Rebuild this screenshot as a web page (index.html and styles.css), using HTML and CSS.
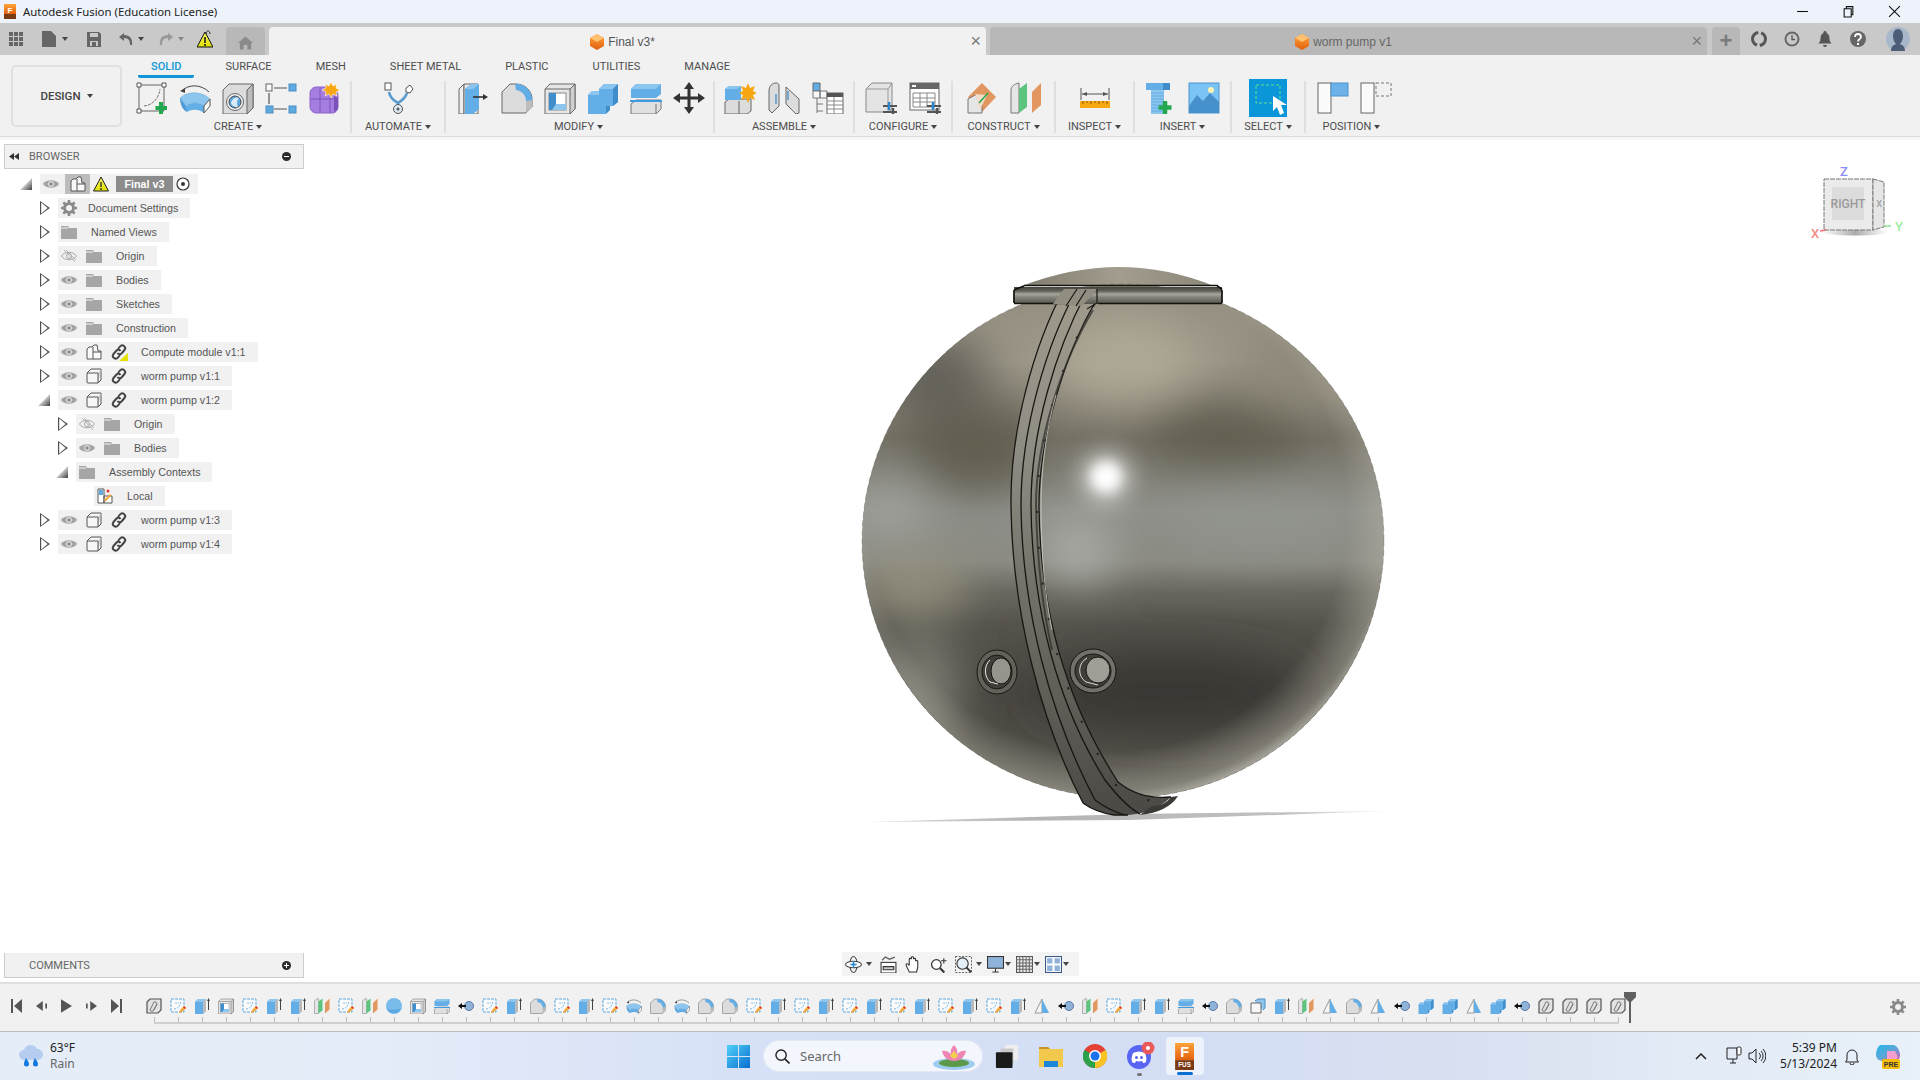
FILE: index.html
```html
<!DOCTYPE html>
<html lang="en">
<head>
    <meta charset="UTF-8">
    <title>Autodesk Fusion (Education License)</title>
    <link rel="stylesheet" href="styles.css">
</head>
<body>
    <svg class="sprites" xmlns="http://www.w3.org/2000/svg">
        <defs>
            <linearGradient id="g-warn" x1="0" y1="0" x2="0" y2="1"><stop offset="0" stop-color="#f6f36a"/><stop offset="1" stop-color="#dfe000"/></linearGradient>
            <linearGradient id="g-orange" x1="0" y1="0" x2="0" y2="1"><stop offset="0" stop-color="#ffa33a"/><stop offset="1" stop-color="#e2600f"/></linearGradient>
            <linearGradient id="g-win" x1="0" y1="0" x2="1" y2="1"><stop offset="0" stop-color="#4fd0f7"/><stop offset="1" stop-color="#0a6fd0"/></linearGradient>
            <linearGradient id="g-copilot" x1="0" y1="0" x2="1" y2="1"><stop offset="0" stop-color="#27b5e8"/><stop offset=".5" stop-color="#5aa7d8"/><stop offset="1" stop-color="#d452b0"/></linearGradient>
        </defs>

        <!-- ribbon -->
        <symbol id="i-sketch-new" viewBox="0 0 32 32">
            <path d="M3 3h25v26H3z" fill="none" stroke="#666"/>
            <path d="M8 24C17 23 23 16 24 7" fill="none" stroke="#777" stroke-dasharray="3 1"/>
            <path d="M1 1h4v4H1zM26 1h4v4h-4zM1 27h4v4H1z" fill="#fff" stroke="#555"/>
            <path d="M25 20v12M19.500 26h11.500" stroke="#23a850" stroke-width="4"/>
        </symbol>
        <symbol id="i-revolve" viewBox="0 0 32 32">
            <path d="M3 9C9 2 22 2 30 10" fill="none" stroke="#444"/>
            <path d="M1 9l5-3 0 5z" fill="#444"/>
            <path d="M1 16c7-7 22-7 30 1l-6 7c-5-4-13-4-18 0z" fill="#8cc5ee" stroke="#6aa8d8" stroke-width=".5"/>
            <path d="M1 16l6 8c1 1 1 4 1 6-4-2-7-7-7-14z" fill="#4f9bd8"/>
            <path d="M7 24c5-4 13-4 18 0v7c-5-4-12-4-17-1z" fill="#63aee6"/>
            <path d="M25 24l6-7v7l-6 7z" fill="#fff" stroke="#555"/>
        </symbol>
        <symbol id="i-hole" viewBox="0 0 32 32">
            <path d="M1 8l6-6h24v24l-6 6H1z" fill="#dcdcdc" stroke="#666"/>
            <path d="M25 32V8l6-6v24z" fill="#bdbdbd" stroke="#666"/>
            <circle cx="13" cy="20" r="8.500" fill="#f2f2f2" stroke="#666"/>
            <circle cx="13" cy="20" r="6" fill="#5da9e0" stroke="#444"/>
            <path d="M9 21a6 6 0 0 1 8-5a8 8 0 0 0-1 9a6 6 0 0 1-7-4z" fill="#dcebf7"/>
        </symbol>
        <symbol id="i-pattern" viewBox="0 0 32 32">
            <path d="M9 6h13M9 27h13M4 11v11" stroke="#555" stroke-width="1.200"/>
            <rect x="1" y="2" width="6" height="7" fill="#f8f8f8" stroke="#666"/>
            <rect x="24" y="2" width="7" height="7" fill="#5da9e0" stroke="#4a90c4"/>
            <rect x="1" y="24" width="7" height="7" fill="#5da9e0" stroke="#4a90c4"/>
            <rect x="24" y="24" width="7" height="7" fill="#5da9e0" stroke="#4a90c4"/>
        </symbol>
        <symbol id="i-form" viewBox="0 0 32 32">
            <path d="M2 12c0-5 3-7 7-7h12c5 0 9 4 9 9v10c0 4-2 7-6 7H9c-4 0-7-2-7-7z" fill="#a67de0" stroke="#8a63c8"/>
            <path d="M3 17h24M12 6v25M22 8v23" stroke="#7d58bd"/>
            <path d="M26 14l4 2v10l-4 5z" fill="#7b52b8"/>
            <path d="M23 0l2 4 4-2-1 4 4 2-4 2 1 4-4-2-2 4-2-4-4 2 1-4-4-2 4-2-1-4 4 2z" fill="#f7a711" stroke="#fff" stroke-width=".6"/>
        </symbol>
        <symbol id="i-auto" viewBox="0 0 32 32">
            <path d="M7 10c1 7 6 9 9 11 3-2 7-4 9-10M16 21v4" fill="none" stroke="#5a9ccf" stroke-width="2.600"/>
            <rect x="3" y="1" width="6" height="7" fill="#fff" stroke="#555"/>
            <path d="M24 6l4-3 3 4-3 4-4-1z" fill="#fff" stroke="#555"/>
            <circle cx="16" cy="27" r="4.500" fill="#dbe8f2" stroke="#555"/>
            <circle cx="16" cy="27" r="1.500" fill="#555"/>
        </symbol>
        <symbol id="i-press" viewBox="0 0 32 32">
            <path d="M1 7l5-5v30H1z" fill="#eee" stroke="#666"/>
            <path d="M6 2h14v30H6z" fill="#e8e8e8" stroke="#666"/>
            <path d="M7 7l6-5h8v25l-6 5H7z" fill="#63aee6"/>
            <path d="M7 7l6-5h8l-6 5z" fill="#8cc5ee"/>
            <path d="M15 15h13" stroke="#333" stroke-width="1.600"/>
            <path d="M25 12l5 3-5 3z" fill="#333"/>
        </symbol>
        <symbol id="i-fillet" viewBox="0 0 32 32">
            <path d="M1 10L9 2h6c9 0 16 7 16 15v8l-6 6H1z" fill="#dcdcdc" stroke="#666"/>
            <path d="M14 2h2c8 0 15 7 15 15v2h-6c0-6-4-10-10-11z" fill="#63aee6"/>
            <path d="M25 31v-12l6-1v8z" fill="#bdbdbd"/>
        </symbol>
        <symbol id="i-shell" viewBox="0 0 32 32">
            <path d="M1 7l5-5h25v25l-5 5H1z" fill="#e6e6e6" stroke="#666"/>
            <path d="M26 32V7l5-5v25z" fill="#cfcfcf" stroke="#666"/>
            <path d="M1 7h25" stroke="#666"/>
            <rect x="5" y="11" width="17" height="17" fill="#fff" stroke="#888"/>
            <path d="M5 11h7v11h10v6H5z" fill="#3f8dcb"/>
            <path d="M12 22h10v6H8z" fill="#8cc5ee"/>
        </symbol>
        <symbol id="i-union" viewBox="0 0 32 32">
            <path d="M12 7l5-5h14v18l-5 4h-7v8H1V13l4-4h7z" fill="#63aee6"/>
            <path d="M12 7l5-5h14l-5 5zM1 13l4-4h7v4z" fill="#8cc5ee"/>
            <path d="M26 7v17l5-4V2zM19 24v8l4-4v-4z" fill="#3f8dcb"/>
        </symbol>
        <symbol id="i-split" viewBox="0 0 32 32">
            <path d="M1 22l5-4h25v9l-5 5H1z" fill="#e0e0e0" stroke="#777"/>
            <path d="M26 32v-10" stroke="#777"/>
            <path d="M1 7l5-5h25v10l-5 4H1z" fill="#63aee6"/>
            <path d="M1 7l5-5h25l-5 5z" fill="#8cc5ee"/>
            <path d="M0 19h32" stroke="#3f9be0" stroke-width="2"/>
        </symbol>
        <symbol id="i-move" viewBox="0 0 32 32">
            <path d="M16 3v26M3 16h26" stroke="#333" stroke-width="3"/>
            <path d="M16 0l5 7H11zM16 32l5-7H11zM0 16l7-5v10zM32 16l-7-5v10z" fill="#333"/>
        </symbol>
        <symbol id="i-newcomp" viewBox="0 0 32 32">
            <path d="M1 20l4-3h22v12l-4 3H1z" fill="#dcdcdc" stroke="#666"/>
            <path d="M15 19v13" stroke="#666"/>
            <path d="M1 7l4-3h12v14H1z" fill="#63aee6"/>
            <path d="M1 7l4-3h12l-4 3z" fill="#8cc5ee"/>
            <path d="M24 1l2 5 5-2-2 5 4 2-4 2 2 5-5-2-2 5-2-5-5 2 2-5-4-2 4-2-2-5 5 2z" fill="#f7a711"/>
        </symbol>
        <symbol id="i-joint-panels" viewBox="0 0 32 32">
            <path d="M1 9c0-6 4-8 7-8 2 0 3 1 3 3v20l-7 7-3-3z" fill="#dcdcdc" stroke="#666"/>
            <path d="M18 5l13 12v14l-3 1-10-10z" fill="#dcdcdc" stroke="#666"/>
            <path d="M8 12v10M20 9v9" stroke="#3f8dcb" stroke-width="1.300"/>
        </symbol>
        <symbol id="i-table" viewBox="0 0 32 32">
            <path d="M1 1h7v8H1z" fill="#63aee6" stroke="#666"/>
            <path d="M1 9h7v7H1zM8 9h7v7H8zM5 16v15M5 22h6M5 29h6" fill="#f8f8f8" stroke="#777"/>
            <rect x="15" y="11" width="16" height="21" fill="#fff" stroke="#666"/>
            <path d="M15 11h16v4H15z" fill="#555"/>
            <path d="M15 19h16M15 23h16M15 27h16M22 15v17" stroke="#888"/>
        </symbol>
        <symbol id="i-conf-box" viewBox="0 0 32 32">
            <path d="M1 7l6-6h20v26l-4 3H1z" fill="#e4e4e4" stroke="#888"/>
            <path d="M1 7h22l4-6" fill="none" stroke="#999"/>
            <path d="M23 7v23" stroke="#999"/>
            <path d="M18 24h14M18 30h14" stroke="#555" stroke-width="2"/>
            <path d="M24 20v8" stroke="#2a85cc" stroke-width="2.500"/>
            <path d="M28 26v6" stroke="#555" stroke-width="2.500"/>
        </symbol>
        <symbol id="i-conf-table" viewBox="0 0 32 32">
            <rect x="1" y="1" width="29" height="27" fill="#fff" stroke="#666"/>
            <path d="M1 1h29v6H1z" fill="#666"/>
            <path d="M3 3h4v2H3z" fill="#fff"/>
            <path d="M4 11h22v14H4zM4 16h22M4 20h22M11 11v14M18 11v14" fill="none" stroke="#888"/>
            <path d="M18 24h14M18 30h14" stroke="#555" stroke-width="2"/>
            <path d="M24 20v8" stroke="#2a85cc" stroke-width="2.500"/>
            <path d="M28 26v6" stroke="#555" stroke-width="2.500"/>
        </symbol>
        <symbol id="i-plane-angle" viewBox="0 0 32 32">
            <path d="M16 1l14 14-14 15-14-15z" fill="#e1975f"/>
            <path d="M2 17l7-4 7 6v12H2z" fill="#e6e6e6" stroke="#777"/>
            <path d="M9 12l12 1-7 15z" fill="#f3dcc8"/>
            <path d="M13 21L22 11" stroke="#23a850" stroke-width="1.500"/>
        </symbol>
        <symbol id="i-plane" viewBox="0 0 32 32">
            <path d="M1 8c0-3 3-6 8-7v30H1z" fill="#e6e6e6" stroke="#777"/>
            <path d="M9 7l8-6v24l-8 6z" fill="#5cc47f"/>
            <path d="M22 10l9-9v22l-9 8z" fill="#e1975f"/>
        </symbol>
        <symbol id="i-measure" viewBox="0 0 32 32">
            <path d="M2 6v12M30 6v12" stroke="#555"/>
            <path d="M3 12h26" stroke="#555"/>
            <path d="M3 12l5-2v4zM29 12l-5-2v4z" fill="#555"/>
            <rect x="1" y="19" width="30" height="7" fill="#f7a711"/>
            <path d="M4 19v3M8 19v2M12 19v3M16 19v2M20 19v3M24 19v2M28 19v3" stroke="#8a5a00"/>
        </symbol>
        <symbol id="i-bolt" viewBox="0 0 32 32">
            <path d="M1 1h24v7H1z" fill="#63aee6"/>
            <path d="M18 1h7v7h-7z" fill="#3f8dcb"/>
            <path d="M6 8h13v24H6z" fill="#8cc5ee"/>
            <path d="M6 11h13M6 14h13M6 17h13M6 20h13M6 23h13M6 26h13M6 29h13" stroke="#63aee6"/>
            <path d="M20 19v13M13.500 25.500h13" stroke="#23a850" stroke-width="4.500"/>
        </symbol>
        <symbol id="i-image" viewBox="0 0 32 32">
            <rect x="1" y="1" width="30" height="30" fill="#7cc3f5" stroke="#4f94cc"/>
            <path d="M1 24l8-11 6 6 7-8 9 9v11H1z" fill="#4690cb"/>
            <circle cx="23" cy="8" r="3" fill="#f8f2b4"/>
        </symbol>
        <symbol id="i-select" viewBox="0 0 38 38">
            <rect width="38" height="38" fill="#0a96d8"/>
            <rect x="7" y="6" width="24" height="18" fill="none" stroke="#5fe08c" stroke-dasharray="3 2"/>
            <path d="M24 17v15l4-4 3 8 4-2-3-8h6z" fill="#fff"/>
        </symbol>
        <symbol id="i-pos-on" viewBox="0 0 32 32">
            <rect x="1" y="1" width="13" height="30" fill="#fbfbfb" stroke="#666"/>
            <rect x="14" y="1" width="17" height="13" fill="#6cb2e8" stroke="#4f94cc"/>
        </symbol>
        <symbol id="i-pos-off" viewBox="0 0 32 32">
            <rect x="1" y="1" width="13" height="30" fill="#fbfbfb" stroke="#666"/>
            <rect x="16" y="1" width="15" height="13" fill="none" stroke="#777" stroke-dasharray="3 2"/>
        </symbol>

        <!-- timeline -->
        <symbol id="t-sketch" viewBox="0 0 16 16">
            <rect x="1" y="1" width="13" height="13" fill="#fafafa" stroke="#5aa7e0" stroke-dasharray="3 1"/>
            <path d="M4 11c4 0 6-3 7-7M5 5h4" fill="none" stroke="#5aa7e0" stroke-width=".8" stroke-dasharray="2 1"/>
            <path d="M9 15l1-3 4-4 2 2-4 4z" fill="#f2a93b"/>
            <path d="M14 8l2 2 -1 1-2-2z" fill="#e3342f"/>
        </symbol>
        <symbol id="t-extrude" viewBox="0 0 16 16">
            <path d="M1 4l3-3h8v12l-3 3H1z" fill="#63aee6"/>
            <path d="M1 4l3-3h8l-3 3z" fill="#8cc5ee"/>
            <path d="M9 4l3-3v12l-3 3z" fill="#bbb"/>
            <path d="M14.500 1v11" stroke="#444"/>
            <path d="M13 3l1.500-3L16 3z" fill="#444"/>
        </symbol>
        <symbol id="t-link" viewBox="0 0 16 16">
            <path d="M1 4l3-3h11v11l-3 3H1z" fill="#e2e2e2" stroke="#555" stroke-width="1.200"/>
            <path d="M4 12l4-8a2.200 2.200 0 0 1 3 2l-4 7a2.200 2.200 0 0 1-3-1zM8 12l3-6" fill="none" stroke="#777"/>
        </symbol>
        <symbol id="t-sphere" viewBox="0 0 16 16">
            <circle cx="8" cy="8" r="8" fill="#79bcec"/>
            <path d="M.5 10a8 8 0 0 0 15 0c-3 2-12 2-15 0z" fill="#5da9e0"/>
        </symbol>
        <symbol id="t-joint" viewBox="0 0 16 16">
            <circle cx="11" cy="8" r="4.500" fill="#8fb2d9" stroke="#5a7da6"/>
            <path d="M0 8l4-3v2h4v2H4v2z" fill="#111"/>
        </symbol>
        <symbol id="t-draft" viewBox="0 0 16 16">
            <path d="M8 1L1 15h7z" fill="#f6f6f6" stroke="#999"/>
            <path d="M8 1l7 14H8z" fill="#63aee6"/>
        </symbol>
        <symbol id="t-copy" viewBox="0 0 16 16">
            <path d="M5 3l3-2h7v9l-2 2" fill="#8cc5ee" stroke="#4a90c4"/>
            <path d="M1 5h10v10H1z" fill="#f6f6f6" stroke="#666"/>
        </symbol>

        <!-- browser tree -->
        <symbol id="b-eye" viewBox="0 0 16 16">
            <path d="M0 8c3-5 13-5 16 0-3 5-13 5-16 0z" fill="#a3a3a3"/>
            <circle cx="8" cy="8" r="3" fill="#dcdcdc"/>
            <circle cx="8" cy="8" r="1.800" fill="#8f8f8f"/>
        </symbol>
        <symbol id="b-eye-off" viewBox="0 0 16 16">
            <path d="M.5 8c3-5 12-5 15 0-3 5-12 5-15 0z" fill="none" stroke="#aaa"/>
            <circle cx="8" cy="8" r="2.500" fill="none" stroke="#aaa"/>
            <path d="M3 2l11 12M5 2l10 10" stroke="#aaa" stroke-width=".8"/>
        </symbol>
        <symbol id="b-folder" viewBox="0 0 16 16">
            <path d="M0 2h7l1 2h8v11H0z" fill="#a6a6a6"/>
            <path d="M0 4h7" stroke="#f2f2f2"/>
        </symbol>
        <symbol id="b-comp" viewBox="0 0 16 16">
            <path d="M1 5l2-2h3l2-2h3l1 6h3v8H1z" fill="#fafafa" stroke="#555" stroke-linejoin="round"/>
            <path d="M7 8h8M7 8v7M7 8V3" stroke="#555" fill="none"/>
        </symbol>
        <symbol id="b-box" viewBox="0 0 16 16">
            <path d="M1 5l4-4h10v11l-3 3H2a1 1 0 0 1-1-1z" fill="#f6f6f6" stroke="#555" stroke-linejoin="round"/>
            <path d="M12 15V5l3-4z" fill="#cfcfcf"/>
            <path d="M1 5h11v10" fill="none" stroke="#555"/>
        </symbol>
        <symbol id="b-link" viewBox="0 0 16 16">
            <path d="M7 5l2-2.500a2.700 2.700 0 0 1 4.500 3.500l-3 3.500a2.700 2.700 0 0 1-4-.5" fill="none" stroke="#444" stroke-width="2"/>
            <path d="M9 11l-2 2.500A2.700 2.700 0 0 1 2.500 10l3-3.500a2.700 2.700 0 0 1 4 .5" fill="none" stroke="#444" stroke-width="2"/>
        </symbol>
        <symbol id="b-gear" viewBox="0 0 16 16">
            <circle cx="8" cy="8" r="4.500" fill="none" stroke="#8a8a8a" stroke-width="3"/>
            <path d="M8 0v3M8 13v3M0 8h3M13 8h3M2.300 2.300l2.200 2.200M11.500 11.500l2.200 2.200M13.700 2.300l-2.200 2.200M4.500 11.500l-2.200 2.200" stroke="#8a8a8a" stroke-width="2.600"/>
        </symbol>
    </svg>

    <header class="titlebar">
        <div class="app-title">
            <svg class="app-logo" viewBox="0 0 14 15">
                <path d="M1 0h12v10H1z" fill="url(#g-orange)"/>
                <path d="M1 10h12v5H1z" fill="#7a3b14"/>
                <text x="7" y="8.500" class="logo-f">F</text>
            </svg>
            <span>Autodesk Fusion (Education License)</span>
        </div>
        <div class="window-btns">
            <svg viewBox="0 0 12 12"><path d="M1 6h10" stroke="#111"/></svg>
            <svg viewBox="0 0 12 12"><path d="M2 3.500h6.500V11H2zM4 3.500V1.500h6V9H8.500" fill="none" stroke="#111"/></svg>
            <svg viewBox="0 0 12 12"><path d="M1 1l10 10M11 1L1 11" stroke="#111"/></svg>
        </div>
    </header>

    <div class="tabstrip">
        <div class="quick">
            <svg class="q-grid" viewBox="0 0 14 14"><path d="M0 0h4v4H0zM5 0h4v4H5zM10 0h4v4h-4zM0 5h4v4H0zM5 5h4v4H5zM10 5h4v4h-4zM0 10h4v4H0zM5 10h4v4H5zM10 10h4v4h-4z" fill="#666"/></svg>
            <svg class="q-doc" viewBox="0 0 14 16"><path d="M0 0h9l5 5v11H0z" fill="#666"/></svg>
            <span class="caret"></span>
            <svg class="q-save" viewBox="0 0 14 15"><path d="M0 0h12l2 2v13H0z" fill="#666"/><path d="M3 1h8v4H3zM3 9h8v5H3z" fill="#c9c9c9"/><path d="M5 10h4v4H5z" fill="#666"/></svg>
            <svg class="q-undo" viewBox="0 0 14 14"><path d="M5 1L0 5l5 4V6c5 0 6 3 6 7h2c1-6-2-10-8-10z" fill="#666"/></svg>
            <span class="caret"></span>
            <svg class="q-redo" viewBox="0 0 14 14"><path d="M9 1l5 4-5 4V6C4 6 3 9 3 13H1C0 7 3 3 9 3z" fill="#999"/></svg>
            <span class="caret caret-dim"></span>
            <svg class="q-warn" viewBox="0 0 16 18"><path d="M9 4c0-4 4-4 4 0" fill="none" stroke="#222"/><path d="M8 2L0 17h16z" fill="url(#g-warn)" stroke="#111"/><path d="M8 7v6M8 14v2" stroke="#111" stroke-width="1.500"/></svg>
        </div>
        <div class="tab home-tab">
            <svg viewBox="0 0 16 14"><path d="M8 0l8 7h-2v7h-4V9H6v5H2V7H0z" fill="#8a8a8a"/></svg>
        </div>
        <div class="tab doc-tab active">
            <span></span>
            <span class="tab-name">
                <svg class="cube" viewBox="0 0 14 16"><path d="M7 0l7 4v8l-7 4-7-4V4z" fill="url(#g-orange)"/><path d="M7 0l7 4-7 4-7-4z" fill="#ffc070"/></svg>
                Final v3*
            </span>
            <span class="tab-close">×</span>
        </div>
        <div class="tab doc-tab">
            <span></span>
            <span class="tab-name">
                <svg class="cube" viewBox="0 0 14 16"><path d="M7 0l7 4v8l-7 4-7-4V4z" fill="url(#g-orange)"/><path d="M7 0l7 4-7 4-7-4z" fill="#ffc070"/></svg>
                worm pump v1
            </span>
            <span class="tab-close">×</span>
        </div>
        <div class="tab plus-tab">+</div>
        <div class="status-icons">
            <svg viewBox="0 0 16 16"><circle cx="8" cy="8" r="6.500" fill="none" stroke="#555" stroke-width="3"/><path d="M7 0h4l-3 6zM9 16H5l3-6z" fill="#c9c9c9"/></svg>
            <svg viewBox="0 0 16 16"><circle cx="8" cy="8" r="7.500" fill="#666"/><circle cx="8" cy="8" r="5.500" fill="#c9c9c9"/><path d="M8 4v4.500h3" fill="none" stroke="#555" stroke-width="1.300"/></svg>
            <svg viewBox="0 0 16 16"><path d="M8 0a1.500 1.500 0 0 1 1.500 2C12 3 12.500 5 12.500 8c0 2 1 3 2 4.500h-13c1-1.500 2-2.500 2-4.500 0-3 .5-5 3-6A1.500 1.500 0 0 1 8 0zM6 14h4a2 2 0 0 1-4 0z" fill="#555"/></svg>
            <svg viewBox="0 0 16 16"><circle cx="8" cy="8" r="8" fill="#666"/><path d="M5 6c0-4 6-4 6 0 0 2-3 2-3 4.500" fill="none" stroke="#fff" stroke-width="1.800"/><path d="M7 12h2v2H7z" fill="#fff"/></svg>
            <svg class="avatar" viewBox="0 0 24 24"><circle cx="12" cy="12" r="12" fill="#a9b7cb"/><path d="M5 24c0-5 3-6 5-7-2-2-3-5-3-8 0-4 2-7 5-7s5 3 5 7c0 3-1 6-3 8 2 1 5 2 5 7z" fill="#4d5d78"/></svg>
        </div>
    </div>

    <section class="ribbon">
        <div class="design-btn">DESIGN<span class="caret"></span></div>
        <div class="ribbon-main">
            <nav class="ribbon-tabs">
                <span class="rtab on">SOLID</span>
                <span class="rtab">SURFACE</span>
                <span class="rtab">MESH</span>
                <span class="rtab">SHEET METAL</span>
                <span class="rtab">PLASTIC</span>
                <span class="rtab">UTILITIES</span>
                <span class="rtab">MANAGE</span>
            </nav>
            <div class="tools">
                <div class="tool-group g-create">
                    <div class="icons">
                        <svg><use href="#i-sketch-new"/></svg>
                        <svg><use href="#i-revolve"/></svg>
                        <svg><use href="#i-hole"/></svg>
                        <svg><use href="#i-pattern"/></svg>
                        <svg><use href="#i-form"/></svg>
                    </div>
                    <div class="group-label">CREATE<span class="caret"></span></div>
                </div>
                <div class="tool-group g-automate">
                    <div class="icons"><svg><use href="#i-auto"/></svg></div>
                    <div class="group-label">AUTOMATE<span class="caret"></span></div>
                </div>
                <div class="tool-group g-modify">
                    <div class="icons">
                        <svg><use href="#i-press"/></svg>
                        <svg><use href="#i-fillet"/></svg>
                        <svg><use href="#i-shell"/></svg>
                        <svg><use href="#i-union"/></svg>
                        <svg><use href="#i-split"/></svg>
                        <svg><use href="#i-move"/></svg>
                    </div>
                    <div class="group-label">MODIFY<span class="caret"></span></div>
                </div>
                <div class="tool-group g-assemble">
                    <div class="icons">
                        <svg><use href="#i-newcomp"/></svg>
                        <svg><use href="#i-joint-panels"/></svg>
                        <svg><use href="#i-table"/></svg>
                    </div>
                    <div class="group-label">ASSEMBLE<span class="caret"></span></div>
                </div>
                <div class="tool-group g-configure">
                    <div class="icons">
                        <svg><use href="#i-conf-box"/></svg>
                        <svg><use href="#i-conf-table"/></svg>
                    </div>
                    <div class="group-label">CONFIGURE<span class="caret"></span></div>
                </div>
                <div class="tool-group g-construct">
                    <div class="icons">
                        <svg><use href="#i-plane-angle"/></svg>
                        <svg><use href="#i-plane"/></svg>
                    </div>
                    <div class="group-label">CONSTRUCT<span class="caret"></span></div>
                </div>
                <div class="tool-group g-inspect">
                    <div class="icons"><svg><use href="#i-measure"/></svg></div>
                    <div class="group-label">INSPECT<span class="caret"></span></div>
                </div>
                <div class="tool-group g-insert">
                    <div class="icons">
                        <svg><use href="#i-bolt"/></svg>
                        <svg><use href="#i-image"/></svg>
                    </div>
                    <div class="group-label">INSERT<span class="caret"></span></div>
                </div>
                <div class="tool-group g-select">
                    <div class="icons"><svg class="select-icon"><use href="#i-select"/></svg></div>
                    <div class="group-label">SELECT<span class="caret"></span></div>
                </div>
                <div class="tool-group g-position">
                    <div class="icons">
                        <svg><use href="#i-pos-on"/></svg>
                        <svg><use href="#i-pos-off"/></svg>
                    </div>
                    <div class="group-label">POSITION<span class="caret"></span></div>
                </div>
            </div>
        </div>
    </section>

    <main class="canvas">
        <!-- the model sits at its own spot on the free canvas -->
        <svg class="model" viewBox="820 250 600 590">
            <defs>
                <clipPath id="ball-clip"><ellipse cx="1123" cy="541" rx="261" ry="257"/></clipPath>
                <filter id="blur-xl" x="-60%" y="-60%" width="220%" height="220%"><feGaussianBlur stdDeviation="22"/></filter>
                <filter id="blur-m" x="-80%" y="-80%" width="260%" height="260%"><feGaussianBlur stdDeviation="11"/></filter>
                <filter id="blur-s" x="-80%" y="-80%" width="260%" height="260%"><feGaussianBlur stdDeviation="6"/></filter>
                <linearGradient id="ball-base" gradientUnits="userSpaceOnUse" x1="0" y1="284" x2="0" y2="798">
                    <stop offset="0" stop-color="#938e80"/>
                    <stop offset=".15" stop-color="#9b9687"/>
                    <stop offset=".3" stop-color="#757165"/>
                    <stop offset=".44" stop-color="#8e8f89"/>
                    <stop offset=".54" stop-color="#8a8a82"/>
                    <stop offset=".6" stop-color="#68665e"/>
                    <stop offset=".66" stop-color="#55534c"/>
                    <stop offset=".8" stop-color="#47453f"/>
                    <stop offset="1" stop-color="#5a5850"/>
                </linearGradient>
                <radialGradient id="ball-rim" cx=".47" cy=".45" r=".56">
                    <stop offset=".82" stop-color="#c4c0b3" stop-opacity="0"/>
                    <stop offset=".96" stop-color="#c4c0b3" stop-opacity=".4"/>
                    <stop offset="1" stop-color="#d2cfc4" stop-opacity=".7"/>
                </radialGradient>
                <linearGradient id="band-fill" gradientUnits="userSpaceOnUse" x1="0" y1="290" x2="0" y2="815">
                    <stop offset="0" stop-color="#a09b8c"/>
                    <stop offset=".3" stop-color="#8f8c83"/>
                    <stop offset=".5" stop-color="#7a7970"/>
                    <stop offset=".7" stop-color="#66655d"/>
                    <stop offset="1" stop-color="#4a4945"/>
                </linearGradient>
                <linearGradient id="ring-fill" x1="0" y1="0" x2="0" y2="1">
                    <stop offset="0" stop-color="#45443e"/>
                    <stop offset=".22" stop-color="#5e5d56"/>
                    <stop offset=".42" stop-color="#a8a69c"/>
                    <stop offset=".6" stop-color="#85837a"/>
                    <stop offset="1" stop-color="#55544c"/>
                </linearGradient>
                <linearGradient id="dome-fill" x1="0" y1="0" x2="1" y2="0">
                    <stop offset="0" stop-color="#807c6f"/>
                    <stop offset=".5" stop-color="#a29d8e"/>
                    <stop offset="1" stop-color="#8b8779"/>
                </linearGradient>
                <linearGradient id="ground" x1="0" y1="0" x2="1" y2="0">
                    <stop offset="0" stop-color="#bbb" stop-opacity=".5"/>
                    <stop offset=".3" stop-color="#b5b5b5"/>
                    <stop offset=".8" stop-color="#c0c0c0"/>
                    <stop offset="1" stop-color="#ddd" stop-opacity=".4"/>
                </linearGradient>
            </defs>

            <path d="M868 822l262-8 259-3-259 9z" fill="url(#ground)"/>
            <path d="M1022 286Q1120 248 1214 286z" fill="url(#dome-fill)"/>

            <ellipse cx="1123" cy="541" rx="261" ry="257" fill="url(#ball-base)"/>
            <g clip-path="url(#ball-clip)">
                <g filter="url(#blur-xl)">
                    <ellipse cx="975" cy="448" rx="65" ry="42" fill="#625e51"/>
                    <ellipse cx="930" cy="375" rx="60" ry="42" fill="#65625a"/>
                    <ellipse cx="1225" cy="435" rx="85" ry="28" fill="#615d50"/>
                    <ellipse cx="1125" cy="360" rx="70" ry="42" fill="#afa897"/>
                    <ellipse cx="1290" cy="365" rx="50" ry="40" fill="#8e897a"/>
                    <ellipse cx="890" cy="510" rx="40" ry="26" fill="#a0a29c"/>
                    <ellipse cx="915" cy="585" rx="55" ry="26" fill="#96927f"/>
                    <ellipse cx="1078" cy="550" rx="38" ry="32" fill="#a9aba5"/>
                    <ellipse cx="1260" cy="522" rx="95" ry="26" fill="#92948e"/>
                    <ellipse cx="920" cy="690" rx="42" ry="60" fill="#7a7970"/>
                    <ellipse cx="1170" cy="692" rx="135" ry="40" fill="#3b3934"/>
                </g>
                <ellipse cx="1123" cy="541" rx="261" ry="257" fill="url(#ball-rim)"/>
            </g>
            <ellipse cx="1123" cy="541" rx="261" ry="257" fill="none" stroke="#4a4942" stroke-width=".6" stroke-dasharray="6 3" opacity=".5"/>
            <ellipse cx="1106" cy="477" rx="26" ry="26" fill="#fff" opacity=".55" filter="url(#blur-m)"/>
            <ellipse cx="1106" cy="477" rx="15" ry="15" fill="#fff" filter="url(#blur-s)"/>

            <!-- band running down the shell -->
            <path d="M1064 289C1034 345 1010 430 1011 505C1012 610 1040 720 1083 803Q1095 812 1114 815L1128 815Q1155 813 1171 797Q1140 800 1118 782C1065 700 1040 610 1039 505C1039 440 1064 355 1096 301L1097 289z" fill="url(#band-fill)"/>
            <path d="M1152 806Q1165 806 1171 797L1178 796Q1168 812 1140 815z" fill="#3b3a36"/>
            <g fill="none" stroke="#171612" stroke-width="1.300">
                <path d="M1064 289C1034 345 1010 430 1011 505C1012 610 1040 720 1083 803Q1095 812 1114 815L1128 815"/>
                <path d="M1077 289C1046 345 1021 430 1021 505C1022 610 1050 715 1095 800Q1108 810 1125 815"/>
                <path d="M1086 293C1056 350 1031 430 1031 505C1032 610 1058 705 1105 780Q1125 806 1140 814"/>
                <path d="M1096 301C1064 355 1039 440 1039 505C1040 610 1065 700 1118 782Q1140 800 1171 797"/>
            </g>
            <path d="M1094 305C1062 358 1037 440 1037 505C1038 610 1063 702 1116 785Q1138 803 1167 801" fill="none" stroke="#1d1c18" stroke-width="2" stroke-dasharray="2 34"/>
            <path d="M1093 310C1063 360 1036 440 1036 505C1037 560 1043 610 1052 650" fill="none" stroke="#33322c" stroke-width="2" opacity=".75"/>
            <path d="M1056 395C1046 430 1041 470 1041 505C1041 560 1046 600 1052 630" fill="none" stroke="#d2d0c8" stroke-width="1" opacity=".8"/>

            <!-- top ring -->
            <rect x="1014" y="287" width="208" height="17" fill="url(#ring-fill)"/>
            <path d="M1024 285.500h193l5 4M1014 303.500h53M1098 303.500h124M1014 290l10-4M1014 290v13M1222 290v13" fill="none" stroke="#12110e" stroke-width="1.700"/>
            <path d="M1064 289C1058 296 1056 300 1053 304L1082 306C1087 300 1094 294 1097 289z" fill="#918d80"/>
            <path d="M1077 289L1066 306M1086 290L1076 306M1097 289V303L1087 309" fill="none" stroke="#1a1915" stroke-width="1.200"/>

            <!-- port holes -->
            <g fill="none" stroke="#171612">
                <ellipse cx="997" cy="672" rx="20" ry="22" fill="#63625a"/>
                <ellipse cx="997" cy="672" rx="15" ry="17" fill="#3f3e38"/>
                <ellipse cx="1001" cy="671" rx="10" ry="13" fill="#96958d"/>
                <path d="M990 660a12 14 0 0 0 0 22l8 2" stroke="#e6e6e0" stroke-width="1"/>
                <ellipse cx="1093" cy="671" rx="23" ry="22" fill="#71706a"/>
                <ellipse cx="1093" cy="671" rx="18" ry="17" fill="#3f3e38"/>
                <ellipse cx="1098" cy="670" rx="12" ry="13" fill="#a09f97"/>
                <path d="M1087 658a14 14 0 0 0-1 24l12 3" stroke="#dcdcd6" stroke-width="1"/>
            </g>
        </svg>

        <aside class="panel browser">
            <div class="panel-head">
                <svg class="rewind" viewBox="0 0 10 7"><path d="M5 0v7L0 3.500zM10 0v7L5 3.500z" fill="#333"/></svg>
                <span>BROWSER</span>
                <span class="panel-toggle minus"></span>
            </div>
            <ul class="tree">
                <li class="node root">
                    <span class="arr open"></span>
                    <span class="item">
                        <svg><use href="#b-eye"/></svg>
                        <span class="active-comp"><svg><use href="#b-comp"/></svg></span>
                        <svg class="warn-icon" viewBox="0 0 16 16"><path d="M8 1L.5 15h15z" fill="url(#g-warn)" stroke="#222"/><path d="M8 6v5M8 12v2" stroke="#222" stroke-width="1.300"/></svg>
                        <span class="pill">Final v3</span>
                        <svg class="radio" viewBox="0 0 14 14"><circle cx="7" cy="7" r="6" fill="#fff" stroke="#333" stroke-width="1.200"/><circle cx="7" cy="7" r="2" fill="#333"/></svg>
                    </span>
                </li>
                <li class="node lv1"><span class="arr"></span><span class="item"><svg><use href="#b-gear"/></svg><span class="label near">Document Settings</span></span></li>
                <li class="node lv1"><span class="arr"></span><span class="item"><svg><use href="#b-folder"/></svg><span class="label">Named Views</span></span></li>
                <li class="node lv1"><span class="arr"></span><span class="item"><svg><use href="#b-eye-off"/></svg><svg><use href="#b-folder"/></svg><span class="label">Origin</span></span></li>
                <li class="node lv1"><span class="arr"></span><span class="item"><svg><use href="#b-eye"/></svg><svg><use href="#b-folder"/></svg><span class="label">Bodies</span></span></li>
                <li class="node lv1"><span class="arr"></span><span class="item"><svg><use href="#b-eye"/></svg><svg><use href="#b-folder"/></svg><span class="label">Sketches</span></span></li>
                <li class="node lv1"><span class="arr"></span><span class="item"><svg><use href="#b-eye"/></svg><svg><use href="#b-folder"/></svg><span class="label">Construction</span></span></li>
                <li class="node lv1"><span class="arr"></span><span class="item"><svg><use href="#b-eye"/></svg><svg><use href="#b-comp"/></svg>
                    <span class="link-warn"><svg><use href="#b-link"/></svg><svg class="mini-warn" viewBox="0 0 9 8"><path d="M9 0v8H0z" fill="#e4e000"/></svg></span>
                    <span class="label">Compute module v1:1</span></span></li>
                <li class="node lv1"><span class="arr"></span><span class="item"><svg><use href="#b-eye"/></svg><svg><use href="#b-box"/></svg><svg><use href="#b-link"/></svg><span class="label">worm pump v1:1</span></span></li>
                <li class="node lv1"><span class="arr open"></span><span class="item"><svg><use href="#b-eye"/></svg><svg><use href="#b-box"/></svg><svg><use href="#b-link"/></svg><span class="label">worm pump v1:2</span></span></li>
                <li class="node lv2"><span class="arr"></span><span class="item"><svg><use href="#b-eye-off"/></svg><svg><use href="#b-folder"/></svg><span class="label">Origin</span></span></li>
                <li class="node lv2"><span class="arr"></span><span class="item"><svg><use href="#b-eye"/></svg><svg><use href="#b-folder"/></svg><span class="label">Bodies</span></span></li>
                <li class="node lv2"><span class="arr open"></span><span class="item"><svg><use href="#b-folder"/></svg><span class="label">Assembly Contexts</span></span></li>
                <li class="node lv3"><span class="arr none"></span><span class="item">
                    <svg viewBox="0 0 16 16"><path d="M1 1h6v14H1zM7 8h8v7H7z" fill="#fff" stroke="#555"/><path d="M2 2h4v5H2z" fill="#5da9e0"/><path d="M7 12l6-6 1.500 1.500-6 6z" fill="#f2a93b"/><circle cx="11" cy="3" r="1.500" fill="#e3342f"/></svg>
                    <span class="label">Local</span></span></li>
                <li class="node lv1"><span class="arr"></span><span class="item"><svg><use href="#b-eye"/></svg><svg><use href="#b-box"/></svg><svg><use href="#b-link"/></svg><span class="label">worm pump v1:3</span></span></li>
                <li class="node lv1"><span class="arr"></span><span class="item"><svg><use href="#b-eye"/></svg><svg><use href="#b-box"/></svg><svg><use href="#b-link"/></svg><span class="label">worm pump v1:4</span></span></li>
            </ul>
        </aside>

        <svg class="viewcube" viewBox="1800 160 110 85">
            <defs>
                <linearGradient id="cube-shadow" x1="0" y1="0" x2="1" y2="0"><stop offset="0" stop-color="#bbb" stop-opacity="0"/><stop offset=".5" stop-color="#aaa"/><stop offset="1" stop-color="#bbb" stop-opacity="0"/></linearGradient>
            </defs>
            <ellipse cx="1855" cy="232" rx="34" ry="3.500" fill="url(#cube-shadow)"/>
            <path d="M1824 179h49v51h-49z" fill="#ebebeb" stroke="#777" stroke-dasharray="5 1"/>
            <path d="M1873 179l11 3v45l-11 3z" fill="#e6e6e6" stroke="#777" stroke-dasharray="5 1"/>
            <rect x="1832" y="187" width="32" height="33" fill="#dcdcdc"/>
            <text x="1848" y="208" class="cube-face">RIGHT</text>
            <text x="1879" y="207" class="cube-side">X</text>
            <text x="1844" y="176" class="axis axis-z">Z</text>
            <text x="1815" y="238" class="axis axis-x">X</text>
            <text x="1899" y="231" class="axis axis-y">Y</text>
            <path d="M1884 226h7" stroke="#8be08b" stroke-width="1.500"/>
            <path d="M1820 231l6-1" stroke="#f07070" stroke-width="1.500"/>
        </svg>

        <aside class="panel comments">
            <span>COMMENTS</span>
            <span class="panel-toggle plus"></span>
        </aside>

        <div class="navbar">
            <svg viewBox="0 0 16 16"><ellipse cx="8" cy="8" rx="3.500" ry="7.500" fill="none" stroke="#444"/><ellipse cx="8" cy="8" rx="7.500" ry="3" fill="#fff" stroke="#444"/><path d="M8 5v6M5 8h6" stroke="#2a85cc" stroke-width="1.500"/></svg>
            <span class="caret"></span>
            <svg class="nv-gap" viewBox="0 0 16 16"><rect x="1" y="6" width="14" height="10" fill="#fff" stroke="#333"/><path d="M3 10h10v3H3z" fill="#ccc" stroke="#333"/><path d="M2 4l3-3 4 2 5-2" fill="none" stroke="#666" stroke-width="1.300"/></svg>
            <svg class="nv-gap" viewBox="0 0 16 16"><path d="M4 15C3 12 1 10 1 8c0-1 2-1 3 1V3c0-1 2-1 2 0V1.500c0-1 2-1 2 0V3c0-1 2-1 2 0v2c0-1 2-1 2 0v5c0 2-1 3-1 5z" fill="#fff" stroke="#333"/></svg>
            <svg class="nv-gap" viewBox="0 0 16 16"><circle cx="6" cy="8" r="4.500" fill="#fff" stroke="#333" stroke-width="1.200"/><path d="M9.500 11.500l4 4" stroke="#333" stroke-width="2"/><path d="M13 2v5M10.500 4.500h5" stroke="#333"/></svg>
            <svg class="nv-gap" viewBox="0 0 18 18"><rect x=".5" y=".5" width="17" height="17" fill="none" stroke="#555" stroke-dasharray="2 1.500"/><circle cx="8" cy="8" r="6" fill="#e4f0f8" stroke="#333" stroke-width="1.200"/><path d="M12 12l5 5" stroke="#333" stroke-width="2"/></svg>
            <span class="caret"></span>
            <svg class="nv-near" viewBox="0 0 16 16"><rect x=".5" y=".5" width="15" height="11" fill="#8fb2d9" stroke="#333"/><path d="M5 15h6M8 12v3" stroke="#333"/></svg>
            <span class="caret nv-tight"></span>
            <svg class="nv-near" viewBox="0 0 16 16"><rect x=".5" y=".5" width="15" height="15" fill="#eee" stroke="#555"/><path d="M3.500 0v16M6.500 0v16M9.500 0v16M12.500 0v16M0 3.500h16M0 6.500h16M0 9.500h16M0 12.500h16" stroke="#666"/></svg>
            <span class="caret nv-tight"></span>
            <svg class="nv-near" viewBox="0 0 16 16"><rect x=".5" y=".5" width="15" height="15" fill="#fff" stroke="#3a5a86"/><path d="M2 2h5v5H2zM9 2h5v5H9zM2 9h5v5H2zM9 9h5v5H9z" fill="#8fb2d9"/></svg>
            <span class="caret nv-tight"></span>
        </div>
    </main>

    <section class="timeline">
        <div class="playback">
            <svg viewBox="0 0 11 14"><path d="M0 0h2v14H0zM11 0v14L3 7z" fill="#555"/></svg>
            <svg viewBox="0 0 13 14"><path d="M8 1v12L0 7zM11 4h2v6h-2z" fill="#555"/></svg>
            <svg viewBox="0 0 13 16"><path d="M0 0l13 8-13 8z" fill="#555"/></svg>
            <svg viewBox="0 0 13 14"><path d="M5 1v12l8-6zM0 4h2v6H0z" fill="#555"/></svg>
            <svg viewBox="0 0 11 14"><path d="M9 0h2v14H9zM0 0v14l8-7z" fill="#555"/></svg>
        </div>
        <div class="track">
            <div class="steps">
                <svg><use href="#t-link"/></svg><svg><use href="#t-sketch"/></svg><svg><use href="#t-extrude"/></svg><svg><use href="#i-shell"/></svg><svg><use href="#t-sketch"/></svg><svg><use href="#t-extrude"/></svg><svg><use href="#t-extrude"/></svg><svg><use href="#i-plane"/></svg>
                <svg><use href="#t-sketch"/></svg><svg><use href="#i-plane"/></svg><svg><use href="#t-sphere"/></svg><svg><use href="#i-shell"/></svg><svg><use href="#i-split"/></svg><svg><use href="#t-joint"/></svg><svg><use href="#t-sketch"/></svg><svg><use href="#t-extrude"/></svg>
                <svg><use href="#i-fillet"/></svg><svg><use href="#t-sketch"/></svg><svg><use href="#t-extrude"/></svg><svg><use href="#t-sketch"/></svg><svg><use href="#i-revolve"/></svg><svg><use href="#i-fillet"/></svg><svg><use href="#i-revolve"/></svg><svg><use href="#i-fillet"/></svg>
                <svg><use href="#i-fillet"/></svg><svg><use href="#t-sketch"/></svg><svg><use href="#t-extrude"/></svg><svg><use href="#t-sketch"/></svg><svg><use href="#t-extrude"/></svg><svg><use href="#t-sketch"/></svg><svg><use href="#t-extrude"/></svg><svg><use href="#t-sketch"/></svg>
                <svg><use href="#t-extrude"/></svg><svg><use href="#t-sketch"/></svg><svg><use href="#t-extrude"/></svg><svg><use href="#t-sketch"/></svg><svg><use href="#t-extrude"/></svg><svg><use href="#t-draft"/></svg><svg><use href="#t-joint"/></svg><svg><use href="#i-plane"/></svg>
                <svg><use href="#t-sketch"/></svg><svg><use href="#t-extrude"/></svg><svg><use href="#t-extrude"/></svg><svg><use href="#i-split"/></svg><svg><use href="#t-joint"/></svg><svg><use href="#i-fillet"/></svg><svg><use href="#t-copy"/></svg><svg><use href="#t-extrude"/></svg>
                <svg><use href="#i-plane"/></svg><svg><use href="#t-draft"/></svg><svg><use href="#i-fillet"/></svg><svg><use href="#t-draft"/></svg><svg><use href="#t-joint"/></svg><svg><use href="#i-union"/></svg><svg><use href="#i-union"/></svg><svg><use href="#t-draft"/></svg>
                <svg><use href="#i-union"/></svg><svg><use href="#t-joint"/></svg><svg><use href="#t-link"/></svg><svg><use href="#t-link"/></svg><svg><use href="#t-link"/></svg><svg><use href="#t-link"/></svg>
            </div>
            <div class="ticks"></div>
            <svg class="marker" viewBox="0 0 12 31"><path d="M0 0h12v5l-5 5v21H5V10L0 5z" fill="#606060"/></svg>
        </div>
        <svg class="tl-gear"><use href="#b-gear"/></svg>
    </section>

    <footer class="taskbar">
        <div class="weather">
            <svg viewBox="0 0 24 26"><path d="M5 17a5 5 0 0 1 0-10 7 7 0 0 1 13-1 5.500 5.500 0 0 1 1 11z" fill="#b6cdf0"/><path d="M7 15c-1 2-2 4-2 6a2.500 2.500 0 0 0 5 0c0-2-2-4-3-6zM16 15c-1 2-2 4-2 6a2.500 2.500 0 0 0 5 0c0-2-2-4-3-6z" fill="#1279e0"/></svg>
            <div class="weather-text"><div>63°F</div><div class="dim">Rain</div></div>
        </div>
        <div class="tb-center">
            <svg class="win" viewBox="0 0 23 23"><path d="M0 0h11v11H0zM12 0h11v11H12zM0 12h11v11H0zM12 12h11v11H12z" fill="url(#g-win)"/></svg>
            <div class="search">
                <svg class="search-glass" viewBox="0 0 16 16"><circle cx="6.500" cy="6.500" r="5.500" fill="none" stroke="#222" stroke-width="1.500"/><path d="M10.500 10.500l5 5" stroke="#222" stroke-width="1.700"/></svg>
                <span>Search</span>
                <svg class="lotus" viewBox="0 0 44 28"><ellipse cx="22" cy="22" rx="21" ry="6" fill="#9fcdee"/><ellipse cx="22" cy="21" rx="15" ry="4" fill="#5c9a4a"/><path d="M22 3c3 3 4 6 3 9 3-3 6-4 9-3-1 5-5 10-12 10s-11-5-12-10c3-1 6 0 9 3-1-3 0-6 3-9z" fill="#ee86b4"/><path d="M18 14l4-5 4 5-4 3z" fill="#f5d04a"/></svg>
            </div>
            <div class="tb-apps">
                <svg viewBox="0 0 24 26"><rect x="10" y="1" width="14" height="17" rx="1" fill="#eee"/><rect x="5" y="5" width="14" height="16" rx="1" fill="#c9c9c9"/><rect x="0" y="9" width="18" height="17" rx="1" fill="#1a1a1a"/></svg>
                <svg viewBox="0 0 24 22"><path d="M0 2h9l2 2h13v18H0z" fill="#f2c94c"/><path d="M0 2h9l2 2H0z" fill="#c8922a"/><path d="M5 16h14v6H5z" fill="#1c87d8"/></svg>
                <svg viewBox="0 0 24 24"><circle cx="12" cy="12" r="12" fill="#e34133"/><path d="M12 12L22.500 6A12 12 0 0 1 12 24z" fill="#f7c325"/><path d="M12 12L12 24A12 12 0 0 1 1.500 6z" fill="#2ba14b"/><circle cx="12" cy="12" r="6" fill="#fff"/><circle cx="12" cy="12" r="4.500" fill="#1a73e8"/></svg>
                <div class="discord">
                    <svg viewBox="0 0 28 28"><circle cx="12" cy="15" r="12" fill="#5865f2"/><path d="M6 11c4-2 8-2 12 0 1 3 2 5 1 9-1 1-3 1-3 1l-1-2c-2 .500-4 .500-6 0l-1 2s-2 0-3-1c-1-4 0-6 1-9z" fill="#fff"/><circle cx="9.500" cy="15.500" r="1.500" fill="#5865f2"/><circle cx="14.500" cy="15.500" r="1.500" fill="#5865f2"/><circle cx="21" cy="6" r="6.500" fill="#ea5a5a"/><circle cx="21" cy="6" r="2" fill="#fff"/></svg>
                    <span class="dot"></span>
                </div>
                <div class="tb-fusion">
                    <svg viewBox="0 0 24 30"><path d="M1 0h21v19H1z" fill="url(#g-orange)"/><path d="M1 19h21v11H1z" fill="#7a3b14"/><text x="11.500" y="15" class="fus-f">F</text><text x="11.500" y="27" class="fus-t">FUS</text></svg>
                    <span class="running"></span>
                </div>
            </div>
        </div>
        <div class="tray">
            <svg class="chev" viewBox="0 0 12 7"><path d="M1 6l5-5 5 5" fill="none" stroke="#222" stroke-width="1.500"/></svg>
            <svg class="net" viewBox="0 0 16 20"><path d="M1 2h10v11H1zM4 17h6M7 13v4" fill="none" stroke="#222"/><rect x="11" y="1" width="4" height="8" rx="1.500" fill="#fff" stroke="#222"/></svg>
            <svg class="vol" viewBox="0 0 18 16"><path d="M1 5h3l4-4v14l-4-4H1z" fill="none" stroke="#222"/><path d="M11 5a4 4 0 0 1 0 6M13 3a7 7 0 0 1 0 10M15 1a10 10 0 0 1 0 14" fill="none" stroke="#222"/></svg>
            <div class="clock"><div>5:39 PM</div><div>5/13/2024</div></div>
            <svg class="bell" viewBox="0 0 14 17"><path d="M2 12V7a5 5 0 0 1 10 0v5l1.500 2H.5zM5 15a2 2 0 0 0 4 0" fill="none" stroke="#222"/></svg>
            <svg class="copilot" viewBox="0 0 24 26"><path d="M5 2h12c4 0 7 6 7 10s-3 6-6 6H7c-4 0-7-3-7-6 0-4 2-10 5-10z" fill="url(#g-copilot)"/><path d="M11 8h8l3 6-4 4h-7z" fill="#f3a0d0"/><rect x="6" y="16" width="18" height="10" rx="2" fill="#f7bd0a"/><text x="15" y="24" class="pre">PRE</text></svg>
        </div>
    </footer>
</body>
</html>
```

FILE: styles.css
```css
* {
    box-sizing: border-box;
}
html, body {
    margin: 0;
    height: 100%;
}
body {
    width: 1920px;
    height: 1080px;
    display: flex;
    flex-direction: column;
    overflow: hidden;
    font-family: "Liberation Sans", Arial, sans-serif;
    font-size: 11px;
    color: #555;
    background-color: #fff;
}
svg {
    display: block;
    flex: none;
}
.sprites {
    position: absolute;
    width: 0;
    height: 0;
}
.caret {
    display: inline-block;
    flex: none;
    width: 0;
    height: 0;
    border-left: 3.5px solid transparent;
    border-right: 3.5px solid transparent;
    border-top: 4px solid #444;
}

/* title bar */
.titlebar {
    height: 23px;
    background-color: #eef3fb;
    display: flex;
    align-items: center;
    justify-content: space-between;
}
.app-title {
    display: flex;
    align-items: center;
    gap: 6px;
    padding-left: 3px;
    font-family: "Noto Sans", sans-serif;
    font-size: 11.4px;
    color: #222;
}
.app-logo {
    width: 14px;
    height: 15px;
}
.logo-f {
    font: bold 8px "Liberation Sans", sans-serif;
    fill: #fff;
    text-anchor: middle;
}
.window-btns {
    display: flex;
    gap: 33px;
    padding-right: 19px;
}
.window-btns svg {
    width: 13px;
    height: 13px;
}

/* tab strip */
.tabstrip {
    height: 32px;
    background-color: #c9c9c9;
    display: flex;
    align-items: flex-end;
    position: relative;
}
.quick {
    width: 226px;
    height: 32px;
    display: flex;
    align-items: center;
    padding-left: 9px;
}
.q-grid { width: 14px; height: 14px; margin-right: 19px; }
.q-doc { width: 14px; height: 16px; margin-right: 6px; }
.q-save { width: 14px; height: 15px; margin: 0 18px 0 19px; }
.q-undo { width: 14px; height: 14px; margin-right: 5px; }
.q-redo { width: 14px; height: 14px; margin: 0 5px 0 15px; }
.q-warn { width: 16px; height: 18px; margin-left: 13px; }
.caret-dim { border-top-color: #888; }
.tab {
    height: 28px;
    border-radius: 4px 4px 0 0;
    background-color: #b8b8b8;
}
.home-tab {
    width: 39px;
    margin-right: 4px;
    display: flex;
    align-items: center;
    justify-content: center;
    padding-top: 4px;
}
.home-tab svg {
    width: 15px;
    height: 14px;
}
.doc-tab {
    width: 717px;
    margin-right: 4px;
    display: grid;
    grid-template-columns: 1fr auto 1fr;
    align-items: center;
    font-size: 12px;
    color: #666;
}
.doc-tab.active {
    background-color: #f1f1f1;
    color: #555;
}
.tab-name {
    display: flex;
    align-items: center;
    gap: 4px;
    padding: 1px 10px 0 0;
}
.cube {
    width: 14px;
    height: 16px;
}
.tab-close {
    justify-self: end;
    padding-right: 5px;
    font-size: 18px;
    line-height: 18px;
    color: #777;
}
.plus-tab {
    width: 28px;
    text-align: center;
    font-size: 22px;
    line-height: 28px;
    font-weight: bold;
    color: #7a7a7a;
    margin-left: 1px;
}
.status-icons {
    flex: 1;
    height: 32px;
    display: flex;
    align-items: center;
    gap: 17px;
    padding-left: 11px;
}
.status-icons svg {
    width: 16px;
    height: 16px;
}
.status-icons .avatar {
    width: 24px;
    height: 24px;
    margin-left: 3px;
}

/* ribbon */
.ribbon {
    height: 85px;
    background: linear-gradient(#f1f1f1 81px, #dcdcdc 81px, #dcdcdc 82px, #f6f6f6 82px);
    display: flex;
    font-family: Roboto, sans-serif;
    color: #4d4d4d;
}
.design-btn {
    width: 111px;
    height: 62px;
    margin: 10px 4px 0 11px;
    border: 2px solid #e0e0e0;
    border-radius: 5px;
    display: flex;
    align-items: center;
    justify-content: center;
    gap: 6px;
    font-size: 11.5px;
    font-weight: 500;
    color: #444;
}
.ribbon-main {
    flex: 1;
}
.ribbon-tabs {
    height: 23px;
    display: flex;
    gap: 18px;
    padding-left: 12px;
}
.rtab {
    padding: 5px 13px 0;
    font-size: 11px;
    line-height: 14px;
}
.rtab.on {
    color: #0f96d9;
    font-weight: 500;
    border-bottom: 3px solid #0f96d9;
    border-radius: 2px;
}
.tools {
    display: flex;
}
.tool-group {
    height: 52px;
    margin-top: 3px;
    padding-top: 1px;
    border-right: 2px solid #dfdfdf;
    display: flex;
    flex-direction: column;
    align-items: center;
}
.g-create { width: 226px; }
.g-automate { width: 94px; }
.g-modify { width: 269px; padding-left: 3px; }
.g-modify .group-label { margin-right: 5px; }
.g-assemble { width: 140px; }
.g-configure { width: 98px; }
.g-construct { width: 103px; }
.g-inspect { width: 79px; }
.g-insert { width: 97px; }
.g-select { width: 74px; }
.g-position { width: 97px; border-right: none; }
.g-position .group-label { margin-right: 6px; }
.icons {
    height: 32px;
    display: flex;
    align-items: center;
    gap: 11px;
}
.g-assemble .icons,
.g-configure .icons,
.g-construct .icons {
    gap: 12px;
}
.icons svg {
    width: 32px;
    height: 32px;
}
.icons .select-icon {
    width: 38px;
    height: 38px;
}
.group-label {
    margin-top: 6px;
    display: flex;
    align-items: center;
    gap: 3px;
    font-size: 11px;
    line-height: 14px;
}

/* drawing canvas */
.canvas {
    flex: 1;
    position: relative;
    background-color: #fff;
}
.model {
    position: absolute;
    left: 820px;
    top: 110px;
    width: 600px;
    height: 590px;
}
.panel {
    position: absolute;
    left: 4px;
    width: 300px;
}
.browser {
    top: 4px;
}
.panel-head {
    height: 25px;
    display: flex;
    align-items: center;
    padding: 0 10px 1px 4px;
    background-color: #f1f1f1;
    border: 1px solid #ccc;
    color: #666;
    font-family: Roboto, sans-serif;
}
.rewind {
    width: 10px;
    height: 7px;
    margin-right: 10px;
}
.panel-toggle {
    margin-left: auto;
    margin-right: 2px;
    width: 9px;
    height: 9px;
    border-radius: 50%;
    background-color: #2b2b2b;
    position: relative;
}
.panel-toggle::before,
.plus::after {
    content: "";
    position: absolute;
    left: 2px;
    top: 4px;
    width: 5px;
    height: 1px;
    background-color: #fff;
}
.plus::after {
    left: 4px;
    top: 2px;
    width: 1px;
    height: 5px;
}
.tree {
    list-style: none;
    margin: 5px 0 0;
    padding: 0;
    font-size: 10.7px;
}
.node {
    height: 20px;
    margin-bottom: 4px;
    display: flex;
    align-items: center;
    gap: 8px;
}
.root { margin-left: 18px; }
.lv1 { margin-left: 36px; }
.lv2 { margin-left: 54px; }
.lv3 { margin-left: 72px; }
.arr {
    width: 10px;
    height: 14px;
    flex: none;
    background-color: #4f4f4f;
    clip-path: polygon(0 0, 100% 50%, 0 100%);
    position: relative;
}
.arr::after {
    content: "";
    position: absolute;
    inset: 1.5px auto auto 1.2px;
    width: 6.5px;
    height: 11px;
    background-color: #fff;
    clip-path: polygon(0 0, 100% 50%, 0 100%);
}
.arr.open {
    clip-path: polygon(100% 0, 100% 100%, 0 100%);
    height: 12px;
    background: linear-gradient(135deg, #e5e5e5 40%, #3e3e3e 100%);
    width: 12px;
    margin-left: -2px;
}
.arr.open::after {
    display: none;
}
.arr.none {
    visibility: hidden;
}
.item {
    height: 20px;
    display: flex;
    align-items: center;
    gap: 9px;
    padding: 0 12px 0 3px;
    background-color: #f1f1f1;
}
.item svg {
    width: 16px;
    height: 16px;
}
.label {
    margin-left: 5px;
    color: #555;
}
.label.near {
    margin-left: 2px;
}
.root .item {
    gap: 0;
    padding-right: 8px;
}
.active-comp {
    width: 25px;
    height: 20px;
    margin-left: 6px;
    background-color: #bcbcbc;
    display: flex;
    align-items: center;
    justify-content: center;
}
.item .warn-icon {
    margin: 0 7px 0 3px;
}
.pill {
    width: 57px;
    height: 16px;
    background-color: #8c8c8c;
    color: #fff;
    font-weight: bold;
    text-align: center;
    line-height: 16px;
}
.item .radio {
    width: 14px;
    height: 14px;
    margin-left: 3px;
}
.link-warn {
    position: relative;
    width: 16px;
    height: 16px;
}
.item .mini-warn {
    position: absolute;
    right: -1px;
    bottom: -1px;
    width: 9px;
    height: 8px;
}
.viewcube {
    position: absolute;
    left: 1800px;
    top: 20px;
    width: 110px;
    height: 85px;
}
.cube-face {
    font: 500 12px Roboto, sans-serif;
    fill: #9a9a9a;
    text-anchor: middle;
}
.cube-side {
    font: bold 9px Roboto, sans-serif;
    fill: #aaa;
    text-anchor: middle;
}
.axis {
    font: 500 13px Roboto, sans-serif;
    text-anchor: middle;
}
.axis-z { fill: #8c8cf5; }
.axis-x { fill: #f58c8c; }
.axis-y { fill: #9cf09c; }
.comments {
    bottom: 4px;
    height: 25px;
    display: flex;
    align-items: center;
    padding: 0 10px 0 24px;
    background-color: #f1f1f1;
    border: 1px solid #ccc;
    border-top: none;
    font-family: Roboto, sans-serif;
    color: #666;
}
.navbar {
    position: absolute;
    left: 842px;
    top: 812px;
    width: 237px;
    height: 24px;
    padding-left: 3px;
    display: flex;
    align-items: center;
    gap: 4px;
    background-color: #f3f3f3;
}
.navbar svg {
    width: 17px;
    height: 17px;
}
.navbar .nv-gap {
    margin-left: 4px;
}
.navbar .nv-near {
    margin-left: 1px;
}
.navbar .nv-tight {
    margin-left: -3px;
}

/* timeline */
.timeline {
    height: 50px;
    background-color: #f1f1f1;
    border-top: 2px solid #dfdfdf;
    border-bottom: 1px solid #b9bcc0;
    display: flex;
    position: relative;
}
.playback {
    width: 146px;
    padding: 15px 0 0 11px;
    display: flex;
    align-items: flex-start;
    gap: 14px;
}
.playback svg {
    width: 11px;
    height: 14px;
}
.track {
    position: relative;
    width: 1490px;
    padding-top: 14px;
}
.steps {
    display: flex;
    gap: 8px;
}
.steps svg {
    width: 16px;
    height: 16px;
}
.ticks {
    width: 1465px;
    height: 7px;
    margin: 3px 0 0 8px;
    border-bottom: 2px solid #cfcfcf;
    background-image: repeating-linear-gradient(to right, #bdbdbd 0, #bdbdbd 1px, transparent 1px, transparent 24px);
}
.marker {
    position: absolute;
    left: 1478px;
    top: 8px;
    width: 12px;
    height: 31px;
}
.tl-gear {
    position: absolute;
    left: 1890px;
    top: 15px;
    width: 16px;
    height: 16px;
}

/* windows taskbar */
.taskbar {
    height: 48px;
    flex: none;
    display: flex;
    align-items: center;
    background: linear-gradient(90deg, #e5eef8 0, #e3ecf8 20%, #d6e0f6 40%, #d3def5 62%, #d8dff0 75%, #e2ebf6 88%, #e8f0f8 100%);
    font-family: "Noto Sans", sans-serif;
    font-size: 12px;
    color: #222;
}
.weather {
    width: 727px;
    display: flex;
    align-items: center;
    gap: 7px;
    padding-left: 19px;
}
.weather svg {
    width: 24px;
    height: 26px;
}
.weather-text {
    line-height: 16px;
}
.dim {
    color: #666;
}
.tb-center {
    display: flex;
    align-items: center;
}
.win {
    width: 23px;
    height: 23px;
}
.search {
    width: 218px;
    height: 30px;
    margin-left: 14px;
    border-radius: 15px;
    background-color: #f3f6fd;
    box-shadow: 0 0 0 1px #e2e8f4;
    display: flex;
    align-items: center;
    padding: 0 6px 0 11px;
    font-size: 13px;
    color: #666;
}
.search-glass {
    width: 15px;
    height: 15px;
    margin-right: 10px;
}
.lotus {
    width: 44px;
    height: 28px;
    margin-left: auto;
}
.tb-apps {
    display: flex;
    align-items: center;
    padding-left: 13px;
    gap: 20px;
}
.tb-apps > svg {
    width: 24px;
    height: 24px;
}
.discord {
    width: 26px;
    position: relative;
}
.discord svg {
    width: 28px;
    height: 28px;
}
.dot {
    position: absolute;
    left: 10px;
    bottom: -6px;
    width: 5px;
    height: 3px;
    border-radius: 2px;
    background-color: #777;
}
.tb-fusion {
    width: 38px;
    height: 38px;
    margin-left: -7px;
    border-radius: 4px;
    background-color: #eef2fb;
    position: relative;
    display: flex;
    justify-content: center;
    padding-top: 6px;
}
.tb-fusion svg {
    width: 22px;
    height: 27px;
}
.fus-f {
    font: bold 16px "Liberation Sans", sans-serif;
    fill: #fff;
    text-anchor: middle;
}
.fus-t {
    font: bold 7px "Liberation Sans", sans-serif;
    fill: #fff;
    text-anchor: middle;
}
.running {
    position: absolute;
    left: 11px;
    bottom: 0;
    width: 16px;
    height: 3px;
    border-radius: 2px;
    background-color: #0a6fd0;
}
.tray {
    flex: 1;
    display: flex;
    align-items: center;
    padding-left: 491px;
}
.chev { width: 12px; height: 7px; margin-right: 19px; }
.net { width: 16px; height: 20px; margin-right: 6px; }
.vol { width: 18px; height: 16px; }
.clock {
    width: 71px;
    text-align: right;
    line-height: 16px;
}
.bell { width: 14px; height: 17px; margin-left: 8px; }
.copilot { width: 24px; height: 26px; margin-left: 17px; }
.pre {
    font: bold 7px "Liberation Sans", sans-serif;
    fill: #333;
    text-anchor: middle;
}
```
